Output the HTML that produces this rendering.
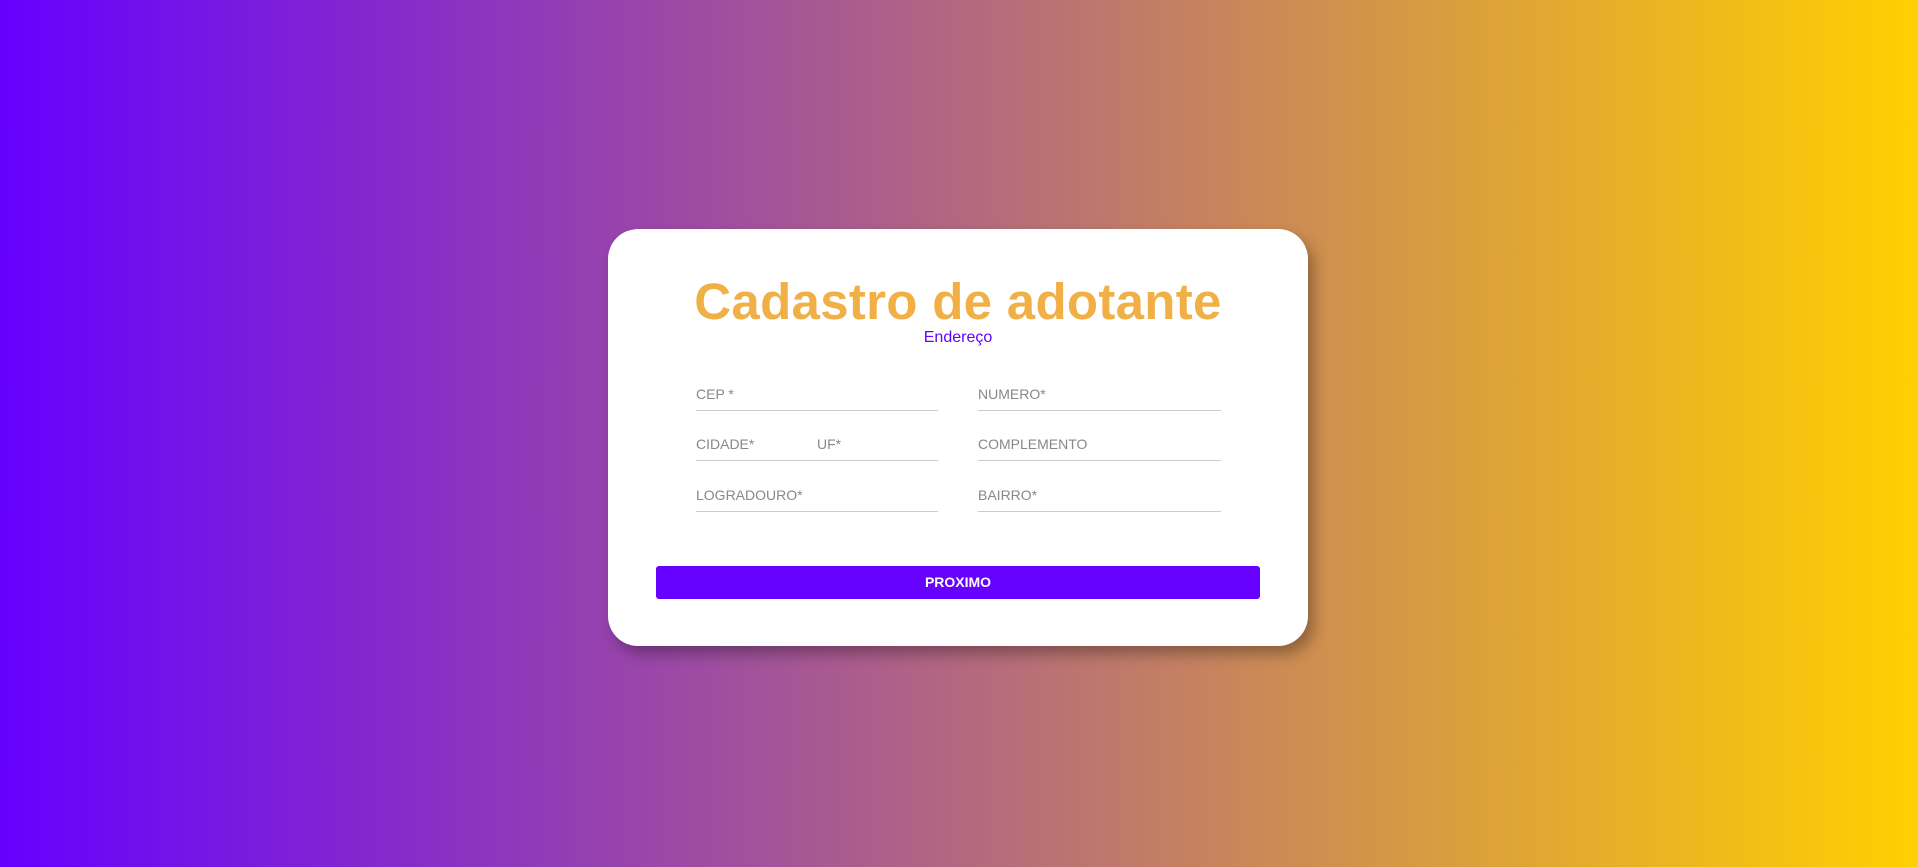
<!DOCTYPE html>
<html><head><meta charset="utf-8"><style>
html,body{margin:0;padding:0;width:1918px;height:867px;overflow:hidden}
body{background:linear-gradient(to right,#6600ff,#ffd000);font-family:"Liberation Sans",sans-serif;position:relative}
.card{position:absolute;left:608px;top:229px;width:700px;height:417px;background:#fff;border-radius:30px;box-shadow:6px 8px 14px rgba(0,0,0,.3)}
h1{position:absolute;left:0;width:700px;top:276px;margin:0;text-align:center;font-size:51px;font-weight:bold;color:#f0b045;letter-spacing:0.3px;line-height:1}
.sub{position:absolute;left:0;width:700px;top:329px;text-align:center;color:#6600ff;font-size:16px}
.f{position:absolute;height:1px;background:#ccc}
.l{position:absolute;color:#888;font-size:14px}
.btn{position:absolute;left:656px;top:566px;width:604px;height:33px;background:#6600ff;border-radius:3px;color:#fff;font-weight:bold;font-size:14px;text-align:center;line-height:33px}
</style></head><body>
<div class="card"></div>
<h1 style="left:608px">Cadastro de adotante</h1>
<div class="sub" style="left:608px">Endereço</div>
<div class="l" style="left:696px;top:386px">CEP *</div>
<div class="f" style="left:696px;top:410px;width:242px"></div>
<div class="l" style="left:978px;top:386px">NUMERO*</div>
<div class="f" style="left:978px;top:410px;width:243px"></div>
<div class="l" style="left:696px;top:436px">CIDADE*</div>
<div class="l" style="left:817px;top:436px">UF*</div>
<div class="f" style="left:696px;top:460px;width:242px"></div>
<div class="l" style="left:978px;top:436px">COMPLEMENTO</div>
<div class="f" style="left:978px;top:460px;width:243px"></div>
<div class="l" style="left:696px;top:487px">LOGRADOURO*</div>
<div class="f" style="left:696px;top:511px;width:242px"></div>
<div class="l" style="left:978px;top:487px">BAIRRO*</div>
<div class="f" style="left:978px;top:511px;width:243px"></div>
<div class="btn">PROXIMO</div>
</body></html>
